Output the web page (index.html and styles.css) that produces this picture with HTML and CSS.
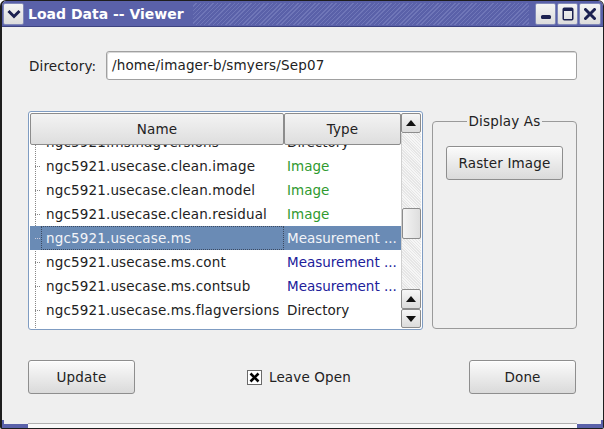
FILE: index.html
```html
<!DOCTYPE html>
<html>
<head>
<meta charset="utf-8">
<link rel="stylesheet" href="styles.css">
</head>
<body>
<div class="window">
  <div class="titlebar">
    <div class="tb-btn tb-menu">
      <svg width="14" height="10" viewBox="0 0 14 10"><path d="M1.5 2 L7 7.5 L12.5 2" fill="none" stroke="#1c2150" stroke-width="3"/></svg>
    </div>
    <div class="title">Load Data -- Viewer</div>
    <div class="stripes"></div>
    <div class="tb-btn">
      <svg width="12" height="12" viewBox="0 0 12 12"><rect x="1" y="7" width="10" height="4" rx="1.5" fill="#1c2150"/></svg>
    </div>
    <div class="tb-btn">
      <svg width="12" height="14" viewBox="0 0 12 14"><rect x="1.25" y="1.25" width="9.5" height="11.5" rx="1" fill="none" stroke="#1c2150" stroke-width="1.5"/><rect x="1" y="1" width="10" height="3" fill="#1c2150"/></svg>
    </div>
    <div class="tb-btn tb-close">
      <svg width="12" height="12" viewBox="0 0 12 12"><path d="M1.5 1.5 L10.5 10.5 M10.5 1.5 L1.5 10.5" stroke="#1c2150" stroke-width="3" stroke-linecap="round"/></svg>
    </div>
  </div>

  <div class="content">
    <div class="dir-row">
      <span class="dir-label">Directory:</span>
      <div class="dir-input">/home/imager-b/smyers/Sep07</div>
    </div>

    <div class="middle">
      <div class="table">
        <div class="table-main">
          <div class="thead">
            <div class="th th-name">Name</div>
            <div class="th th-type">Type</div>
          </div>
          <div class="tbody">
            <div class="rows">
              <div class="row"><span class="name">ngc5921.ms.flagversions</span><span class="type">Directory</span></div>
              <div class="row"><span class="name">ngc5921.usecase.clean.image</span><span class="type t-img">Image</span></div>
              <div class="row"><span class="name">ngc5921.usecase.clean.model</span><span class="type t-img">Image</span></div>
              <div class="row"><span class="name">ngc5921.usecase.clean.residual</span><span class="type t-img">Image</span></div>
              <div class="row sel"><span class="name">ngc5921.usecase.ms</span><span class="type">Measurement ...</span></div>
              <div class="row"><span class="name">ngc5921.usecase.ms.cont</span><span class="type t-ms">Measurement ...</span></div>
              <div class="row"><span class="name">ngc5921.usecase.ms.contsub</span><span class="type t-ms">Measurement ...</span></div>
              <div class="row"><span class="name">ngc5921.usecase.ms.flagversions</span><span class="type">Directory</span></div>
            </div>
          </div>
        </div>
        <div class="scrollbar">
          <div class="sb-btn"><svg width="10" height="6" viewBox="0 0 10 6"><path d="M0 6 L5 0 L10 6Z" fill="#111"/></svg></div>
          <div class="sb-track"><div class="sb-thumb"></div></div>
          <div class="sb-btn"><svg width="10" height="6" viewBox="0 0 10 6"><path d="M0 6 L5 0 L10 6Z" fill="#111"/></svg></div>
          <div class="sb-btn"><svg width="10" height="6" viewBox="0 0 10 6"><path d="M0 0 L5 6 L10 0Z" fill="#111"/></svg></div>
        </div>
      </div>

      <fieldset class="group">
        <legend>Display As</legend>
        <button class="btn btn-raster">Raster Image</button>
      </fieldset>
    </div>

    <div class="bottom">
      <button class="btn btn-wide">Update</button>
      <label class="check">
        <span class="checkbox"><svg width="13" height="13" viewBox="0 0 13 13"><path d="M2.5 2.5 L10.5 10.5 M10.5 2.5 L2.5 10.5" stroke="#000" stroke-width="2.6"/></svg></span>
        <span>Leave Open</span>
      </label>
      <button class="btn btn-wide">Done</button>
    </div>
  </div>

  <div class="frame-bottom">
    <div class="corner corner-l"></div>
    <div class="frame-mid"></div>
    <div class="corner corner-r"></div>
  </div>
</div>
</body>
</html>
```

FILE: styles.css
```css
* { box-sizing: border-box; }
html, body { margin: 0; padding: 0; background: #ffffff; }
body {
  width: 604px;
  height: 429px;
  font-family: "DejaVu Sans", "Liberation Sans", sans-serif;
  font-size: 13.5px;
  letter-spacing: 0.15px;
  color: #222;
}

.window {
  width: 604px;
  height: 429px;
  border: 1px solid #1e1e1e;
  border-left-width: 2px;
  border-radius: 6px 6px 2px 2px;
  background: #efefef;
  display: flex;
  flex-direction: column;
  overflow: hidden;
}

/* ---------- title bar ---------- */
.titlebar {
  height: 26px;
  flex: none;
  display: flex;
  align-items: stretch;
  background: #5a61a9;
  padding: 2px 2px 1px 1px;
  gap: 1px;
  border-bottom: 1px solid #3c4280;
}
.tb-btn {
  width: 21px;
  flex: none;
  background: linear-gradient(#f4f4f4, #dcdcdc);
  border: 1px solid #8088b8;
  border-radius: 2px;
  display: flex;
  align-items: center;
  justify-content: center;
}
.tb-menu { width: 21px; margin-right: 3px; }
.tb-close { width: 22px; }
.title {
  color: #ffffff;
  font-weight: bold;
  font-size: 14px;
  letter-spacing: 0;
  line-height: 22px;
  padding-right: 8px;
  white-space: nowrap;
}
.stripes {
  flex: 1;
  margin-right: 5px;
  background: repeating-linear-gradient(135deg, #5a61a9 0 2px, #6f76b8 2px 3px);
}

/* ---------- content ---------- */
.content {
  flex: 1;
  padding: 0 26px 0 26px;
  display: flex;
  flex-direction: column;
}

.dir-row {
  margin-top: 24px;
  display: flex;
  align-items: center;
  height: 29px;
}
.dir-label { padding-left: 1px; width: 78px; }
.dir-input {
  flex: 1;
  height: 29px;
  background: #fff;
  border: 1px solid #a0a0a0;
  border-radius: 3px;
  box-shadow: inset 1px 1px 0 #d8d8d8;
  padding-left: 5px;
  line-height: 26px;
}

.middle {
  margin-top: 31px;
  display: flex;
  align-items: flex-start;
}

/* ---------- table ---------- */
.table {
  width: 395px;
  height: 219px;
  flex: none;
  border: 1px solid #7f9cc2;
  border-radius: 3px;
  padding: 1px;
  display: flex;
  background: #fff;
}
.table-main {
  flex: 1;
  display: flex;
  flex-direction: column;
  min-width: 0;
}
.thead {
  display: flex;
  height: 32px;
  flex: none;
}
.th {
  background: linear-gradient(#f3f3f3, #dedede);
  border: 1px solid #8c8c8c;
  border-radius: 2px;
  display: flex;
  align-items: center;
  justify-content: center;
  color: #222;
}
.th-name { width: 254px; }
.th-type { flex: 1; }

.tbody {
  flex: 1;
  overflow: hidden;
  background:
    repeating-linear-gradient(#888 0 1px, transparent 1px 2px) 5px 0 / 1px 100% no-repeat,
    #fff;
}
.rows { margin-top: -15px; }
.row {
  height: 24px;
  display: flex;
  align-items: center;
  white-space: nowrap;
  background:
    repeating-linear-gradient(90deg, #888 0 1px, transparent 1px 2px) 5px 12px / 6px 1px no-repeat;
}
.name {
  width: 254px;
  flex: none;
  padding-left: 16px;
  height: 24px;
  line-height: 24px;
  overflow: hidden;
}
.type {
  padding-left: 3px;
  flex: 1;
  overflow: hidden;
  line-height: 24px;
  letter-spacing: 0;
}
.t-img { color: #2f9a2f; }
.t-ms { color: #20209a; }
.row.sel {
  background:
    repeating-linear-gradient(90deg, #ccd 0 1px, transparent 1px 2px) 5px 12px / 6px 1px no-repeat,
    #6a8bb5;
  color: #f2f4f8;
}
.row.sel .name {
  border: 1px dotted #3d4a60;
  margin-left: 11px;
  padding-left: 4px;
  width: 243px;
  line-height: 22px;
}

/* ---------- scrollbar ---------- */
.scrollbar {
  width: 20px;
  flex: none;
  display: flex;
  flex-direction: column;
}
.sb-btn {
  height: 20px;
  flex: none;
  background: linear-gradient(#f6f6f6, #dcdcdc);
  border: 1px solid #8c8c8c;
  border-radius: 2px;
  display: flex;
  align-items: center;
  justify-content: center;
}
.sb-btn + .sb-btn { height: 19px; }
.sb-track {
  flex: 1;
  background:
    repeating-linear-gradient(45deg, #e6e6e6 0 1px, #f6f6f6 1px 2px);
  border-left: 1px solid #d0d0d0;
}
.sb-thumb {
  margin-top: 75px;
  height: 31px;
  background: linear-gradient(90deg, #f4f4f4, #dedede);
  border: 1px solid #8c8c8c;
  border-radius: 2px;
}

/* ---------- group ---------- */
.group {
  margin: 2px 0 0 9px;
  width: 145px;
  height: 216px;
  border: 1px solid #9a9a9a;
  border-radius: 4px;
  padding: 17px 13px 0 13px;
  min-width: 0;
}
.group legend {
  margin: 0 auto;
  padding: 0 2px;
  line-height: 16px;
  color: #222;
}

/* ---------- buttons ---------- */
.btn {
  font-family: "DejaVu Sans", "Liberation Sans", sans-serif;
  font-size: 13.5px;
  letter-spacing: 0.15px;
  color: #222;
  background: linear-gradient(#fbfbfb, #dadada);
  border: 1px solid #8e8e8e;
  border-radius: 3px;
  height: 34px;
  padding: 0;
  box-shadow: inset 0 1px 0 #fff;
}
.btn-raster { width: 117px; }
.btn-wide { width: 107px; }

.bottom {
  margin-top: 30px;
  display: flex;
  align-items: center;
  justify-content: space-between;
  padding-right: 1px;
}
.check {
  display: flex;
  align-items: center;
  gap: 7px;
  margin-left: -6px;
}
.checkbox {
  width: 15px;
  height: 15px;
  border: 1px solid #6a6a6a;
  background: #fff;
  display: flex;
  align-items: center;
  justify-content: center;
}

/* ---------- bottom frame ---------- */
.frame-bottom {
  height: 8px;
  flex: none;
  margin-top: auto;
  display: flex;
}
.corner {
  width: 26px;
  flex: none;
  border-bottom: 4px solid #5a61a9;
}
.corner-l { border-left: 2px solid #5a61a9; }
.corner-r { border-right: 2px solid #5a61a9; }
.frame-mid {
  flex: 1;
  margin-top: 3px;
  border-top: 1px solid #b0b0b0;
  background: #f8f8f8;
}
```
